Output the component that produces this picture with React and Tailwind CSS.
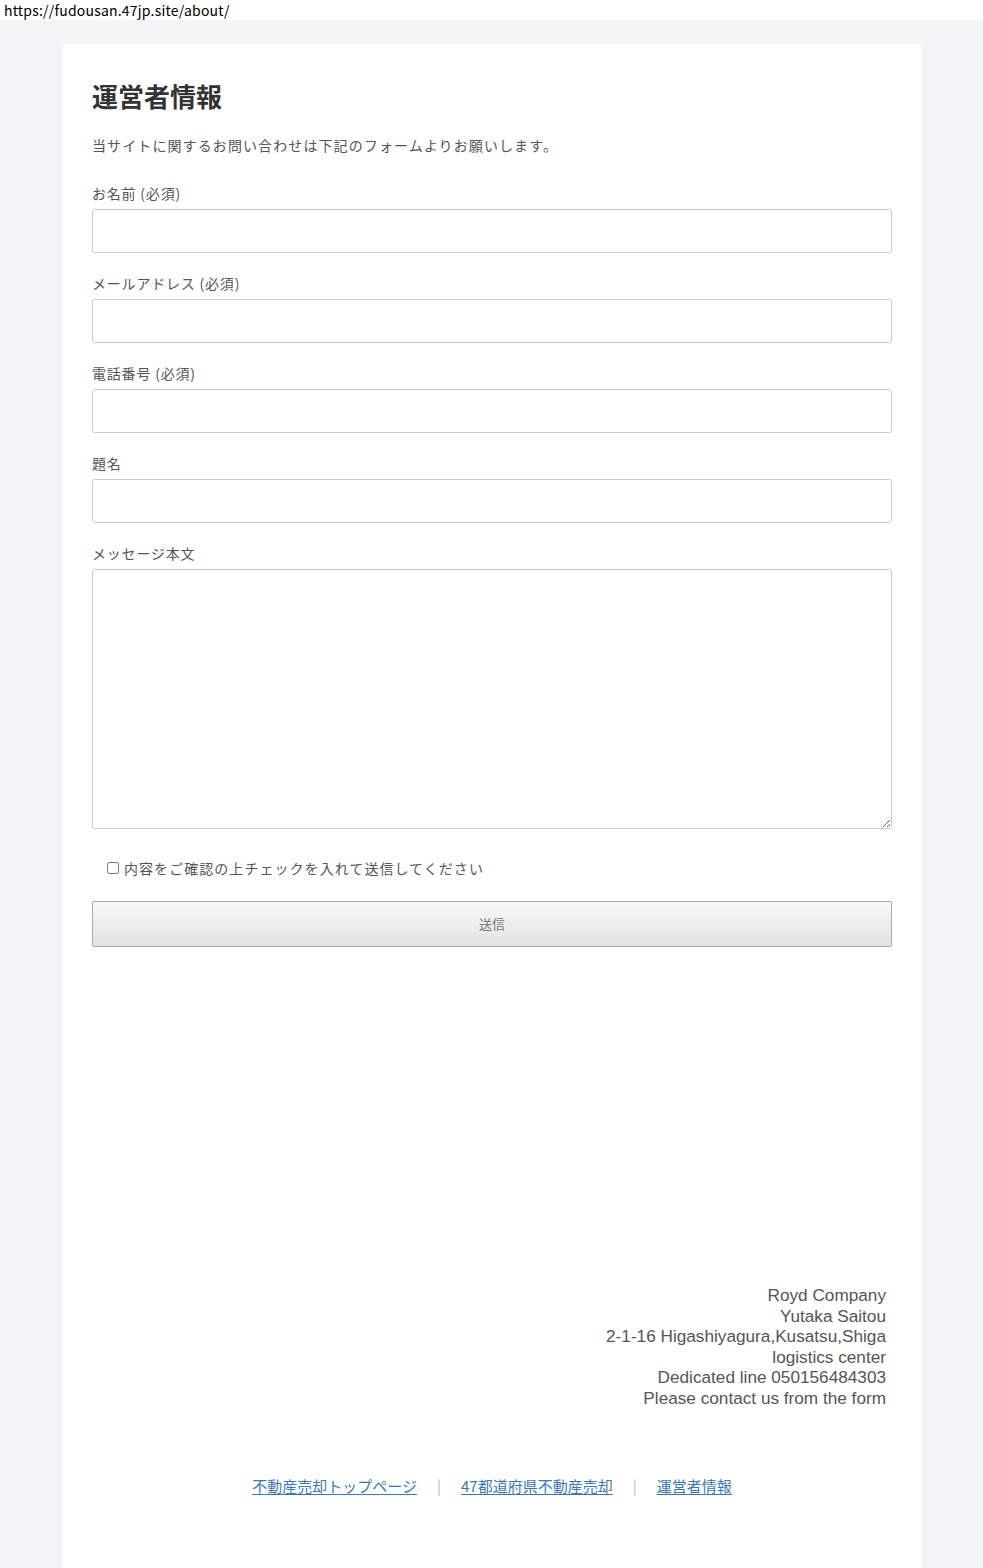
export default function App() {
  const fields = [
    { label: 'お名前 (必須)' },
    { label: 'メールアドレス (必須)' },
    { label: '電話番号 (必須)' },
    { label: '題名' },
  ];

  const links = ['不動産売却トップページ', '47都道府県不動産売却', '運営者情報'];

  return (
    <div className="min-h-[1568px] bg-[#f3f4f6] font-['Noto_Sans_CJK_JP',sans-serif] text-[#555]">
      <div className="h-5 bg-white px-1 text-[14px] leading-5 tracking-[0.2px] text-black">https://fudousan.47jp.site/about/</div>

      <div className="ml-[62px] mr-[61px] mt-6 min-h-[1524px] bg-white px-[30px] pt-[30px] pb-16">
        <h1 className="text-[26px] font-bold leading-[44px] text-[#333]">運営者情報</h1>
        <p className="mt-[17px] text-[14px] leading-5 tracking-[1.1px]">
          当サイトに関するお問い合わせは下記のフォームよりお願いします。
        </p>

        <form className="mt-[28px] flex flex-col">
          {fields.map((f) => (
            <div key={f.label} className="mb-[20px] flex flex-col">
              <label className="mb-[6px] text-[14px] leading-5 tracking-[0.8px]">{f.label}</label>
              <input type="text" className="h-[44px] w-full rounded-[3px] border border-[#ccc] bg-white" />
            </div>
          ))}
          <div className="flex flex-col">
            <label className="mb-[6px] text-[14px] leading-5 tracking-[0.8px]">メッセージ本文</label>
            <textarea className="h-[260px] w-full rounded-[3px] border border-[#ccc] bg-white" />
          </div>

          <label className="mt-[29px] ml-[15px] flex items-center gap-[5px] text-[14px] leading-5 tracking-[1.05px]">
            <input type="checkbox" className="h-[12px] w-[12px] accent-[#ddd]" />
            内容をご確認の上チェックを入れて送信してください
          </label>

          <button
            type="button"
            className="mt-[23px] h-[46px] w-full rounded-[2px] border border-[#aaa] bg-gradient-to-b from-[#f9f9f9] to-[#e2e2e2] text-[13px] text-[#777]"
          >
            送信
          </button>
        </form>

        <div className="mt-[338px] pr-[6px] text-right font-['Liberation_Sans',Arial,sans-serif] text-[17.2px] leading-[20.6px] text-[#555]">
          <div>Royd Company</div>
          <div>Yutaka Saitou</div>
          <div>2-1-16 Higashiyagura,Kusatsu,Shiga</div>
          <div>logistics center</div>
          <div>Dedicated line 050156484303</div>
          <div>Please contact us from the form</div>
        </div>

        <div className="mt-[67px] flex items-center justify-center text-[15px] leading-5">
          {links.map((l, i) => (
            <div key={l} className="flex items-center">
              {i > 0 && <span className="mx-[20px] text-[#bbb]">|</span>}
              <a href="#" className="text-[#3a78b8] underline underline-offset-2">{l}</a>
            </div>
          ))}
        </div>
      </div>
    </div>
  );
}
